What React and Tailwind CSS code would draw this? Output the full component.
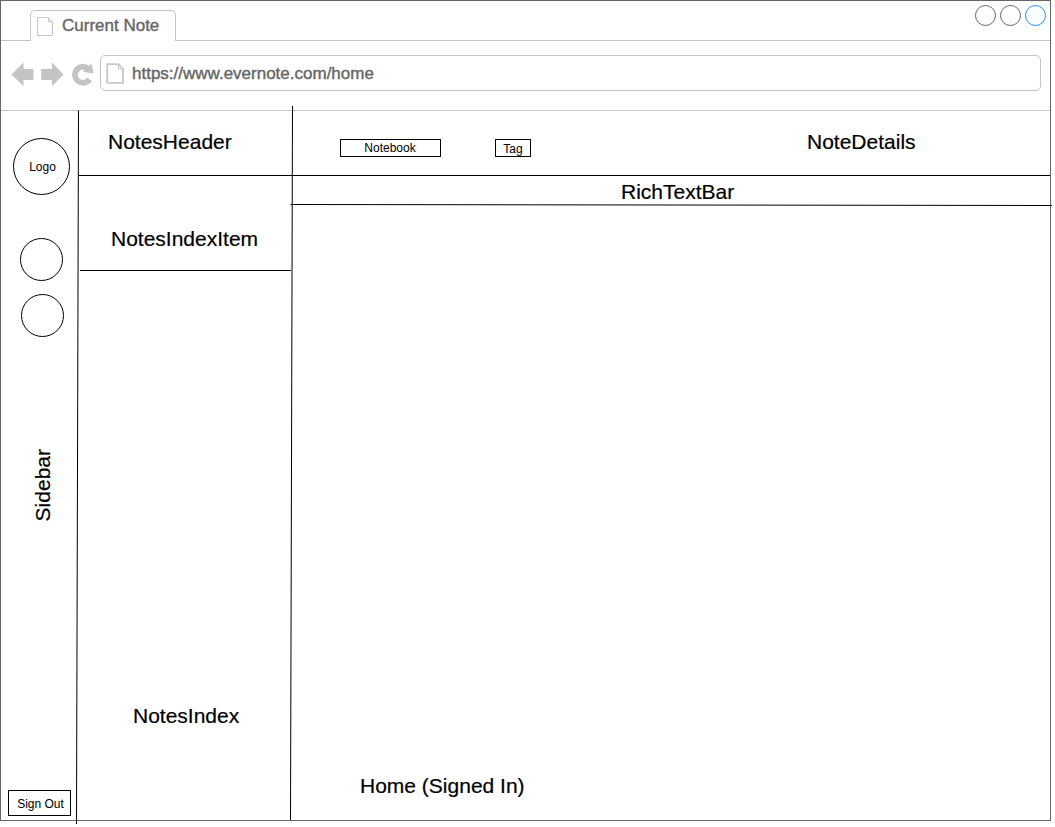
const heading =
  "block whitespace-nowrap text-[21px] leading-6 text-black [-webkit-text-stroke:0.2px_#000]";

function PageIcon({ className, strokeWidth }) {
  return (
    <svg className={className} viewBox="0 0 18 21" fill="none" stroke="#c4c4c4" strokeWidth={strokeWidth}>
      <path d="M1.5 1.5H12L16.5 6V19.5H1.5Z" />
      <path d="M12.5 1.5V5.5H16.5" strokeWidth="1" />
    </svg>
  );
}

function TabStrip() {
  return (
    <div className="flex h-10 shrink-0 justify-between border-b border-[#c4c4c4] pl-[29px] pr-1">
      <div className="mt-[9px] flex h-[31px] w-[146px] rounded-t-[5px] border border-b-0 border-[#c4c4c4] bg-white pl-[5px]">
        <PageIcon className="mt-[5px] h-[21px] w-[18px] shrink-0" strokeWidth="1" />
        <span className="ml-2 mt-1 whitespace-nowrap text-[17px] leading-[21px] text-[#666] [-webkit-text-stroke:0.4px_#666]">
          Current Note
        </span>
      </div>
      <div className="mt-1 flex gap-1">
        <span className="size-[21px] rounded-full border border-[#666]" />
        <span className="size-[21px] rounded-full border border-[#666]" />
        <span className="size-[21px] rounded-full border border-[#1990ff]" />
      </div>
    </div>
  );
}

function Toolbar() {
  return (
    <div className="flex h-[70px] shrink-0 border-b border-[#c4c4c4] pl-[10px] pr-[9px] pt-[14px]">
      <svg className="mt-[5px] h-[30px] w-[89px] shrink-0" viewBox="11 60 89 30">
        <g fill="#c4c4c4">
          <path d="M11.5 74.5L23.5 62.5V69H33.5V80H23.5V86.3Z" />
          <path d="M63.5 74.5L52 62.5V69H41.2V80H52V86.3Z" />
          <path d="M91.6 63.2L93.6 73.6L82.8 71.8Z" />
        </g>
        <path d="M89.6 79.3A8 8 0 1 1 88.1 68.6" fill="none" stroke="#c4c4c4" strokeWidth="5.8" />
      </svg>
      <div className="flex h-9 flex-1 rounded-[5px] border border-[#c4c4c4] pl-[5px]">
        <svg className="mt-[7px] h-[21px] w-[19px] shrink-0" viewBox="0 0 19 21" fill="none" stroke="#c8c8c8">
          <path d="M1.2 1.2H12.5L17 6V19.8H1.2Z" strokeWidth="1.8" />
          <path d="M12.5 1.5V6H17" strokeWidth="1" />
        </svg>
        <span className="ml-[7px] mt-[7px] whitespace-nowrap text-[17px] leading-[21px] text-[#666] [-webkit-text-stroke:0.4px_#666]">
          https://www.evernote.com/home
        </span>
      </div>
    </div>
  );
}

function Sidebar() {
  return (
    <aside className="flex w-[77px] shrink-0 flex-col">
      <div className="ml-3 mt-[27px] flex size-[57px] shrink-0 items-center justify-center rounded-full border border-black pl-[2px] text-xs text-black">
        Logo
      </div>
      <div className="ml-[19px] mt-[43px] size-[43px] shrink-0 rounded-full border border-black" />
      <div className="ml-5 mt-[13px] size-[43px] shrink-0 rounded-full border border-black" />
      <div className="ml-[30px] mt-[112px] h-[74px] w-6">
        <span className={`${heading} rotate-180 [writing-mode:vertical-rl]`}>Sidebar</span>
      </div>
      <button className="mb-1 ml-[7px] mt-auto h-[26px] w-[63px] whitespace-nowrap border border-black pl-0.5 pt-0.5 text-xs text-black">
        Sign Out
      </button>
    </aside>
  );
}

function NotesColumn() {
  return (
    <section className="flex w-[213px] shrink-0 flex-col">
      <div className="h-[65px] shrink-0 border-b border-black pl-[30px] pt-[19px]">
        <span className={heading}>NotesHeader</span>
      </div>
      <div className="ml-0.5 h-[95px] shrink-0 border-b border-black pl-[31px] pt-[51px]">
        <span className={heading}>NotesIndexItem</span>
      </div>
      <div className="pl-[55px] pt-[433px]">
        <span className={heading}>NotesIndex</span>
      </div>
    </section>
  );
}

function NoteDetails() {
  return (
    <section className="flex min-w-0 flex-1 flex-col">
      <div className="flex h-[65px] shrink-0 border-b border-black pl-[49px]">
        <span className="mt-7 h-[18px] w-[101px] border border-black pr-px text-center text-xs leading-4 text-black">
          Notebook
        </span>
        <span className="ml-[54px] mt-7 h-[18px] w-9 border border-black text-center text-xs leading-[18px] text-black">
          Tag
        </span>
        <span className={`${heading} ml-[276px] mt-[19px]`}>NoteDetails</span>
      </div>
      <div className="h-[29px] shrink-0 pl-[330px] pt-1">
        <span className={heading}>RichTextBar</span>
      </div>
      <div className="mt-auto pb-[22px] pl-[69px]">
        <span className={heading}>Home (Signed In)</span>
      </div>
    </section>
  );
}

export default function App() {
  return (
    <div className="relative h-[827px] w-[1055px] overflow-hidden bg-white font-['Liberation_Sans',Arial,sans-serif]">
      <div className="flex h-[821px] w-[1051px] flex-col border border-[#666]">
        <TabStrip />
        <Toolbar />
        <main className="flex min-h-0 flex-1">
          <Sidebar />
          <NotesColumn />
          <NoteDetails />
        </main>
      </div>
      {/* Hand-drawn dividers, each slightly off its axis and crossing the window frame */}
      <svg className="pointer-events-none absolute inset-0" width="1055" height="827" stroke="#000" strokeWidth="1">
        <path d="M78.5 110.5L76.5 824" />
        <path d="M292.5 106L290.5 820" />
        <path d="M290.5 204.5L1052 205.5" />
      </svg>
    </div>
  );
}
